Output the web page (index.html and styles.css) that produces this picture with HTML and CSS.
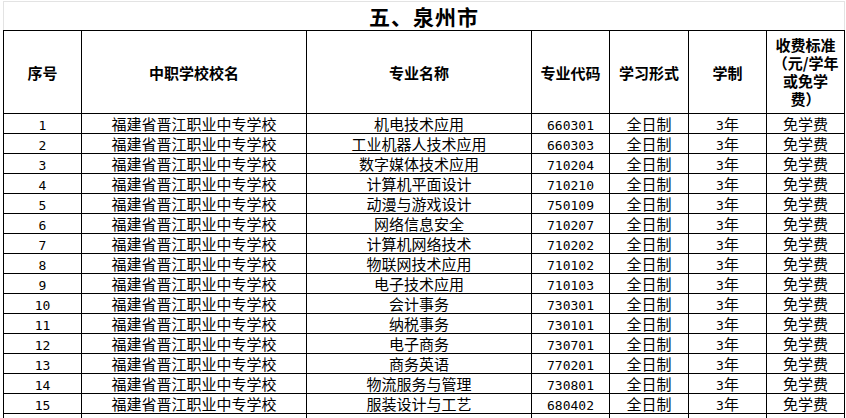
FILE: index.html
```html
<!DOCTYPE html>
<html lang="zh-CN">
<head>
<meta charset="utf-8">
<title>五、泉州市</title>
<link rel="stylesheet" href="styles.css">
</head>
<body>
<div class="wrap">
<table class="grid">
<colgroup>
<col class="c1"><col class="c2"><col class="c3"><col class="c4"><col class="c5"><col class="c6"><col class="c7">
</colgroup>
<tr class="title-row"><td colspan="7">五、泉州市</td></tr>
<tr class="head-row">
<th>序号</th><th>中职学校校名</th><th>专业名称</th><th>专业代码</th><th>学习形式</th><th>学制</th>
<th class="fee">收费标准<br>（元/学年<br>或免学<br>费）</th>
</tr>
<tr><td><span class="d">1</span></td><td>福建省晋江职业中专学校</td><td>机电技术应用</td><td><span class="d">660301</span></td><td>全日制</td><td><span class="d">3</span>年</td><td>免学费</td></tr>
<tr><td><span class="d">2</span></td><td>福建省晋江职业中专学校</td><td>工业机器人技术应用</td><td><span class="d">660303</span></td><td>全日制</td><td><span class="d">3</span>年</td><td>免学费</td></tr>
<tr><td><span class="d">3</span></td><td>福建省晋江职业中专学校</td><td>数字媒体技术应用</td><td><span class="d">710204</span></td><td>全日制</td><td><span class="d">3</span>年</td><td>免学费</td></tr>
<tr><td><span class="d">4</span></td><td>福建省晋江职业中专学校</td><td>计算机平面设计</td><td><span class="d">710210</span></td><td>全日制</td><td><span class="d">3</span>年</td><td>免学费</td></tr>
<tr><td><span class="d">5</span></td><td>福建省晋江职业中专学校</td><td>动漫与游戏设计</td><td><span class="d">750109</span></td><td>全日制</td><td><span class="d">3</span>年</td><td>免学费</td></tr>
<tr><td><span class="d">6</span></td><td>福建省晋江职业中专学校</td><td>网络信息安全</td><td><span class="d">710207</span></td><td>全日制</td><td><span class="d">3</span>年</td><td>免学费</td></tr>
<tr><td><span class="d">7</span></td><td>福建省晋江职业中专学校</td><td>计算机网络技术</td><td><span class="d">710202</span></td><td>全日制</td><td><span class="d">3</span>年</td><td>免学费</td></tr>
<tr><td><span class="d">8</span></td><td>福建省晋江职业中专学校</td><td>物联网技术应用</td><td><span class="d">710102</span></td><td>全日制</td><td><span class="d">3</span>年</td><td>免学费</td></tr>
<tr><td><span class="d">9</span></td><td>福建省晋江职业中专学校</td><td>电子技术应用</td><td><span class="d">710103</span></td><td>全日制</td><td><span class="d">3</span>年</td><td>免学费</td></tr>
<tr><td><span class="d">10</span></td><td>福建省晋江职业中专学校</td><td>会计事务</td><td><span class="d">730301</span></td><td>全日制</td><td><span class="d">3</span>年</td><td>免学费</td></tr>
<tr><td><span class="d">11</span></td><td>福建省晋江职业中专学校</td><td>纳税事务</td><td><span class="d">730101</span></td><td>全日制</td><td><span class="d">3</span>年</td><td>免学费</td></tr>
<tr><td><span class="d">12</span></td><td>福建省晋江职业中专学校</td><td>电子商务</td><td><span class="d">730701</span></td><td>全日制</td><td><span class="d">3</span>年</td><td>免学费</td></tr>
<tr><td><span class="d">13</span></td><td>福建省晋江职业中专学校</td><td>商务英语</td><td><span class="d">770201</span></td><td>全日制</td><td><span class="d">3</span>年</td><td>免学费</td></tr>
<tr><td><span class="d">14</span></td><td>福建省晋江职业中专学校</td><td>物流服务与管理</td><td><span class="d">730801</span></td><td>全日制</td><td><span class="d">3</span>年</td><td>免学费</td></tr>
<tr><td><span class="d">15</span></td><td>福建省晋江职业中专学校</td><td>服装设计与工艺</td><td><span class="d">680402</span></td><td>全日制</td><td><span class="d">3</span>年</td><td>免学费</td></tr>
<tr class="tail"><td></td><td></td><td></td><td></td><td></td><td></td><td></td></tr>
</table>
</div>
</body>
</html>
```

FILE: styles.css
```css
html, body {
  margin: 0;
  padding: 0;
  background: #fff;
}
body {
  width: 846px;
  height: 418px;
  overflow: hidden;
  font-family: "Noto Sans CJK SC", "Noto Sans", sans-serif;
  color: #000;
}
.wrap {
  padding: 1px 0 0 3px;
}
.grid {
  border-collapse: collapse;
  table-layout: fixed;
  width: 841px;
}
.c1 { width: 78px; }
.c2 { width: 225px; }
.c3 { width: 225px; }
.c4 { width: 78px; }
.c5 { width: 79px; }
.c6 { width: 78px; }
.c7 { width: 78px; }
.grid td, .grid th {
  border: 1px solid #000;
  padding: 0;
  text-align: center;
  vertical-align: middle;
  font-size: 15px;
  line-height: 19px;
  height: 19px;
  white-space: nowrap;
  overflow: hidden;
}
.title-row td {
  border: 1px solid #e3e3e3;
  border-bottom: 1px solid #000;
  height: 28px;
  font-size: 21px;
  font-weight: bold;
  line-height: 28px;
  letter-spacing: 1px;
}
.head-row th {
  height: 82px;
  font-weight: bold;
  font-size: 15px;
}
.head-row th.fee {
  line-height: 18px;
  white-space: normal;
}
.d {
  font-family: "DejaVu Sans Mono", monospace;
  font-size: 13px;
  line-height: 1;
}
.tail td {
  height: 19px;
}
```
